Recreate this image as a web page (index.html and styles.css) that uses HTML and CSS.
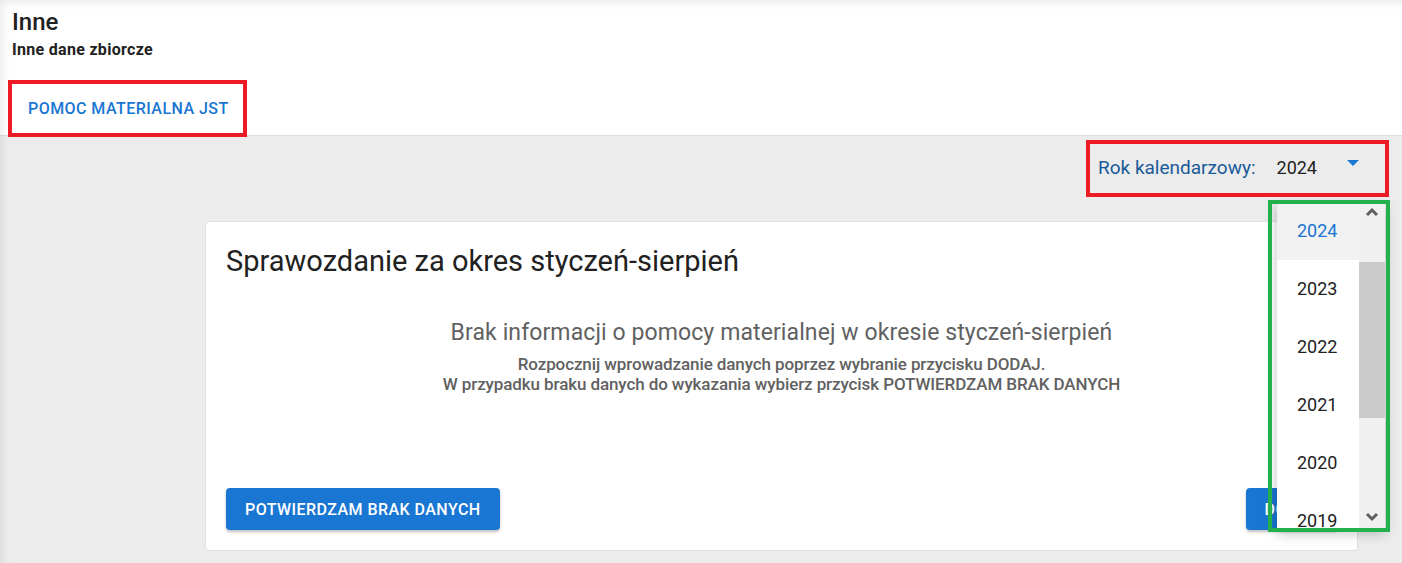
FILE: index.html
```html
<!DOCTYPE html>
<html lang="pl">
<head>
  <meta charset="UTF-8" />
  <meta name="viewport" content="width=device-width, initial-scale=1.0"/>
  <title>Inne - dane zbiorcze</title>
  <link rel="stylesheet" href="styles.css">
</head>
<body>
  <div class="page">
    <header class="page-head">
      <h1>Inne</h1>
      <p class="subtitle">Inne dane zbiorcze</p>
      <nav class="tabs">
        <button class="tab active">POMOC MATERIALNA JST</button>
      </nav>
    </header>

    <main class="content">
      <div class="toolbar">
        <div class="year-select">
          <span class="year-label">Rok kalendarzowy:</span>
          <span class="year-value">2024</span>
          <span class="year-arrow"></span>
        </div>
      </div>

      <section class="card">
        <h2 class="card-title">Sprawozdanie za okres styczeń-sierpień</h2>
        <div class="empty">
          <h3>Brak informacji o pomocy materialnej w okresie styczeń-sierpień</h3>
          <p>Rozpocznij wprowadzanie danych poprzez wybranie przycisku DODAJ.<br>
          W przypadku braku danych do wykazania wybierz przycisk POTWIERDZAM BRAK DANYCH</p>
        </div>
        <div class="actions">
          <button class="btn">POTWIERDZAM BRAK DANYCH</button>
          <button class="btn">DODAJ</button>
        </div>
      </section>
    </main>

    <!-- otwarta lista lat -->
    <div class="year-menu">
      <ul class="year-list">
        <li class="selected">2024</li>
        <li>2023</li>
        <li>2022</li>
        <li>2021</li>
        <li>2020</li>
        <li>2019</li>
      </ul>
      <div class="scrollbar">
        <svg class="scroll-arrow" width="14" height="10" viewBox="0 0 14 10"><path d="M2 8 L7 3 L12 8" fill="none" stroke="#5f5f5f" stroke-width="3"/></svg>
        <div class="thumb"></div>
        <svg class="scroll-arrow down" width="14" height="10" viewBox="0 0 14 10"><path d="M2 2 L7 7 L12 2" fill="none" stroke="#5f5f5f" stroke-width="3"/></svg>
      </div>
    </div>

    <!-- ramki zaznaczen -->
    <div class="mark mark-tab"></div>
    <div class="mark mark-select"></div>
    <div class="mark mark-menu"></div>
  </div>
</body>
</html>
```

FILE: styles.css
```css
* {
  box-sizing: border-box;
}
body {
  margin: 0;
  font-family: Roboto, "Liberation Sans", sans-serif;
  color: #212121;
  background: #ececec;
}
.page {
  position: relative;
  height: 563px;
  overflow: hidden;
}
.page::before {
  content: "";
  position: absolute;
  inset: 0;
  box-shadow: inset 7px 7px 12px -7px rgba(0,0,0,0.12);
  pointer-events: none;
  z-index: 2;
}
.page-head {
  background: white;
  padding: 8px 12px 3px;
  border-bottom: 1px solid #dcdcdc;
}
h1 {
  margin: 0;
  font-size: 24px;
  line-height: 28px;
  font-weight: 500;
}
.subtitle {
  margin: 4px 0 0;
  font-size: 16px;
  line-height: 20px;
  font-weight: 700;
  letter-spacing: 0.3px;
}
.tabs {
  display: flex;
  margin-top: 24px;
}
.tab {
  height: 48px;
  padding: 0 16px;
  border: none;
  background: none;
  font-family: inherit;
  font-size: 16px;
  font-weight: 500;
  letter-spacing: 0.45px;
  color: #1976d2;
}
.content {
  padding: 7px 18px 0 205px;
}
.toolbar {
  display: flex;
  justify-content: flex-end;
}
.year-select {
  display: flex;
  align-items: center;
  width: 294px;
  height: 49px;
  padding: 0 8px;
  position: relative;
}
.year-label {
  font-size: 19px;
  color: #1a5a98;
}
.year-value {
  font-size: 18px;
  margin-left: 21px;
}
.year-arrow {
  position: absolute;
  right: 25px;
  top: 17px;
  border-left: 6px solid transparent;
  border-right: 6px solid transparent;
  border-top: 6px solid #1976d2;
}
.card {
  margin-top: 29px;
  width: 1153px;
  height: 330px;
  background: white;
  border: 1px solid #e0e0e0;
  border-radius: 4px;
  padding: 22px 20px 20px;
  display: flex;
  flex-direction: column;
}
.card-title {
  margin: 0;
  font-size: 29px;
  line-height: 34px;
  font-weight: 400;
}
.empty {
  text-align: center;
  color: #616161;
  margin-top: 41px;
}
.empty h3 {
  margin: 0;
  font-size: 23px;
  line-height: 28px;
  font-weight: 400;
  letter-spacing: 0.1px;
}
.empty p {
  margin: 7px 0 0;
  font-size: 17px;
  line-height: 20px;
  font-weight: 500;
  letter-spacing: -0.1px;
}
.actions {
  margin-top: auto;
  display: flex;
  justify-content: space-between;
}
.btn {
  height: 42px;
  padding: 0 19px;
  border: none;
  border-radius: 4px;
  background: #1976d2;
  color: white;
  font-family: inherit;
  font-size: 16px;
  font-weight: 500;
  letter-spacing: 0.45px;
  box-shadow: 0 2px 3px rgba(0,0,0,0.25);
}
.year-menu {
  position: absolute;
  left: 1277px;
  top: 202px;
  width: 108px;
  height: 326px;
  display: flex;
  background: white;
  box-shadow: 0 5px 12px rgba(0,0,0,0.25);
  overflow: hidden;
  z-index: 3;
}
.year-list {
  list-style: none;
  margin: 0;
  padding: 0;
  width: 82px;
}
.year-list li {
  height: 58px;
  line-height: 58px;
  padding-left: 20px;
  font-size: 18px;
}
.year-list li.selected {
  background: #f2f2f2;
  color: #1976d2;
}
.scrollbar {
  width: 26px;
  background: #f0f0f0;
  position: relative;
}
.scroll-arrow {
  position: absolute;
  left: 6px;
  top: 5px;
}
.scroll-arrow.down {
  top: auto;
  bottom: 6px;
}
.thumb {
  position: absolute;
  left: 0;
  right: 0;
  top: 60px;
  height: 156px;
  background: #cbcbcb;
}
.mark {
  position: absolute;
  border: 4px solid #ed1c24;
  z-index: 4;
}
.mark-tab {
  left: 8px;
  top: 80px;
  width: 239px;
  height: 57px;
}
.mark-select {
  left: 1086px;
  top: 140px;
  width: 303px;
  height: 57px;
}
.mark-menu {
  left: 1268px;
  top: 200px;
  width: 122px;
  height: 332px;
  border-color: #22b14c;
}
```
